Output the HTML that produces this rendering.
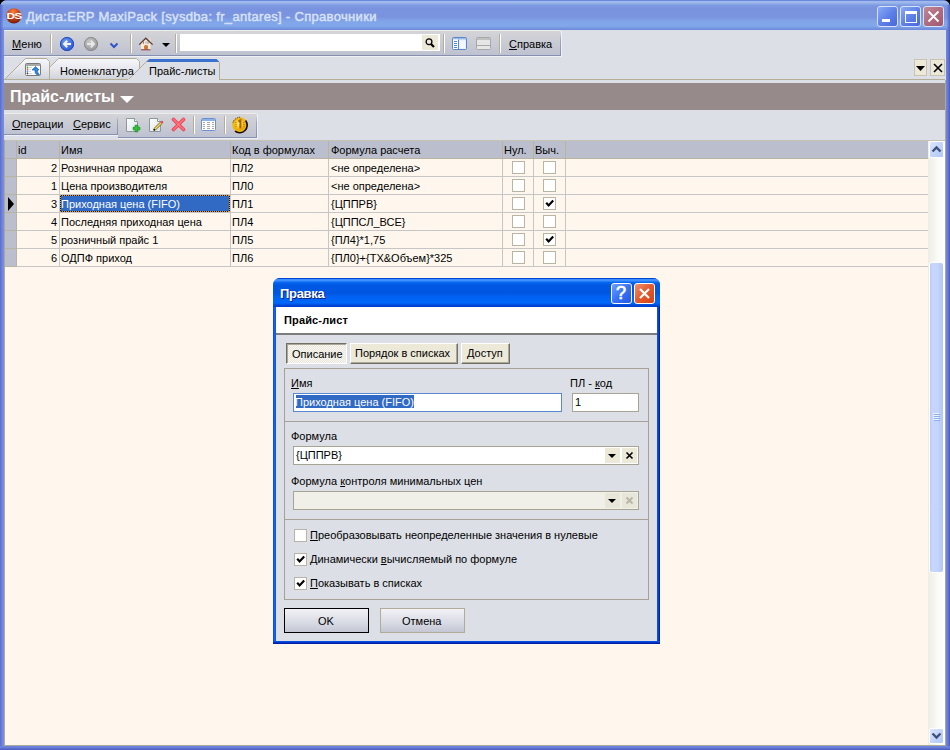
<!DOCTYPE html>
<html><head><meta charset="utf-8">
<style>
*{box-sizing:border-box;margin:0;padding:0}
html,body{width:950px;height:750px;overflow:hidden;background:#000}
body{font-family:"Liberation Sans",sans-serif;font-size:11px;color:#000;position:relative}
.a{position:absolute}
.t{position:absolute;white-space:nowrap;line-height:13px}
u{text-decoration:underline;text-underline-offset:1px;text-decoration-thickness:1px}
#win{left:0;top:0;width:950px;height:750px;background:#7185DA;border-radius:8px 8px 0 0}
#title{left:0;top:0;width:950px;height:30px;border-radius:7px 7px 0 0;
 background:linear-gradient(#6A88DC 0,#6A88DC 1px,#A2BAEC 1px,#9CB6EA 3px,#7E9CE2 5px,#7A93DF 8px,#7A94DF 17px,#80A4E8 21px,#82A8EA 26px,#7898E2 28px,#6C88DA 30px)}
#client{left:4px;top:30px;width:942px;height:716px;background:#DCDFE6}
.tb{position:absolute;background:linear-gradient(#ECECE8 0,#ECECE8 1px,#D4D4D8 1px,#CACCD4 50%,#BEC2D0);border-bottom:1px solid #8890B0;box-shadow:1px 1px 0 #EEF0F4}
.tb::after{content:"";position:absolute;right:0;top:0;width:1px;height:100%;background:linear-gradient(#E8E8EC,#A0A6BE 40%,#8890B0)}
.sep{position:absolute;width:2px;border-left:1px solid #B5AE95;border-right:1px solid #FFF}
#grid{left:4px;top:140px;width:924px;height:606px;background:#FFF7EE}
.hdr{position:absolute;top:141px;height:17px;background:#BBBFCD}
.vl{position:absolute;width:1px;background:#C8C4B8}
.hl{position:absolute;height:1px;background:#C8C4B8}
.cb{position:absolute;width:13px;height:13px;background:#FFF;border:1px solid #B8B4A6}
</style></head><body>
<div id="win" class="a"></div>
<div id="title" class="a">
  <svg class="a" style="left:5px;top:7px" width="18" height="18"><defs><radialGradient id="lg" cx="0.45" cy="0.25" r="0.8"><stop offset="0" stop-color="#F58040"/><stop offset="0.5" stop-color="#C84414"/><stop offset="1" stop-color="#701400"/></radialGradient></defs><circle cx="8.8" cy="8.8" r="7.6" fill="url(#lg)"/><text x="9" y="12.3" font-family="Liberation Sans" font-weight="bold" font-size="9.5" fill="#fff" text-anchor="middle" letter-spacing="-0.6" transform="translate(9 0) scale(1.25 1) translate(-9 0)">DS</text></svg>
<div class="t" style="left:26px;top:9px;font-size:13px;color:#D8E2F6;line-height:15px;letter-spacing:0.32px;-webkit-text-stroke:0.45px #D8E2F6">Диста:ERP MaxiPack [sysdba: fr_antares] - Справочники</div>
  <!-- buttons -->
  <div class="a" style="left:877px;top:6px;width:21px;height:21px;border:1px solid #D8E2FA;border-radius:3px;background:linear-gradient(135deg,#8AAAF4,#5C7EE6 55%,#4A68DC)"><div class="a" style="left:4px;top:12px;width:8px;height:3px;background:#fff"></div></div>
  <div class="a" style="left:900px;top:6px;width:21px;height:21px;border:1px solid #D8E2FA;border-radius:3px;background:linear-gradient(135deg,#8AAAF4,#5C7EE6 55%,#4A68DC)"><div class="a" style="left:4px;top:4px;width:12px;height:12px;border:1.5px solid #fff;border-top-width:3px"></div></div>
  <div class="a" style="left:923px;top:6px;width:21px;height:21px;border:1px solid #D8E2FA;border-radius:3px;background:linear-gradient(135deg,#C08898,#AE6A7C 55%,#A05A70)">
    <svg class="a" style="left:3px;top:3px" width="13" height="13"><path d="M1.5 1.5L11.5 11.5M11.5 1.5L1.5 11.5" stroke="#fff" stroke-width="1.8"/></svg></div>
</div>
<div class="a" style="left:0;top:5px;width:3px;height:25px;background:linear-gradient(90deg,rgba(80,90,200,.8),rgba(100,120,215,.4))"></div>
<div class="a" style="left:947px;top:5px;width:3px;height:25px;background:linear-gradient(90deg,rgba(100,120,215,.3),rgba(70,80,190,.8))"></div>
<div id="client" class="a"></div>

<!-- top toolbar -->
<div class="a tb" style="left:4px;top:30px;width:557px;height:26px"></div>
<div class="t" style="left:12px;top:38px"><u>М</u>еню</div>
<div class="sep" style="left:50px;top:34px;height:19px"></div>
<div class="a" style="left:60px;top:37px;width:14px;height:14px;border-radius:50%;background:radial-gradient(circle at 40% 35%,#6E9CF4,#2F5FD8 70%,#2448B0)"></div>
<svg class="a" style="left:60px;top:37px" width="14" height="14"><circle cx="7" cy="7" r="6.5" fill="none" stroke="#2A48B8" stroke-width="1"/><path d="M11 7H4M7.2 3.8L4 7L7.2 10.2" stroke="#F4F4F4" stroke-width="2" fill="none"/></svg>
<div class="a" style="left:84px;top:37px;width:14px;height:14px;border-radius:50%;background:radial-gradient(circle at 40% 35%,#C8C8C8,#9A9A9A 70%,#888)"></div>
<svg class="a" style="left:84px;top:37px" width="14" height="14"><circle cx="7" cy="7" r="6.5" fill="none" stroke="#8A8A8A" stroke-width="1"/><path d="M3 7H10M6.8 3.8L10 7L6.8 10.2" stroke="#E8E8E8" stroke-width="2" fill="none"/></svg>
<svg class="a" style="left:109px;top:42px" width="10" height="7"><path d="M1.5 1.5L5 5L8.5 1.5" stroke="#2F55C8" stroke-width="2" fill="none"/></svg>
<div class="sep" style="left:130px;top:34px;height:19px"></div>
<svg class="a" style="left:138px;top:37px" width="16" height="14"><rect x="11" y="1" width="2" height="4" fill="#E8D8C0"/><path d="M3 6.5L7.8 2L12.5 6.5V12.5H3Z" fill="#F8EAD8"/><rect x="6" y="8" width="4" height="4.5" rx="1.5" fill="#C87838"/><rect x="7" y="4.5" width="2" height="2" fill="#A8D0F0"/><path d="M5.5 4.5V7M10 4.5V7" stroke="#C88850" stroke-width="1"/><path d="M1.2 7.6L7.8 1.2L14.6 7.6" stroke="#5A3A38" stroke-width="1.3" fill="none"/><path d="M3 12.8H12.5" stroke="#8A2020" stroke-width="0.9"/></svg>
<svg class="a" style="left:162px;top:43px" width="8" height="4"><path d="M0 0H8L4 4Z" fill="#000"/></svg>
<div class="sep" style="left:175px;top:34px;height:19px"></div>
<div class="a" style="left:180px;top:34px;width:260px;height:17px;background:#fff"></div>
<div class="a" style="left:422px;top:35px;width:16px;height:15px;background:#ECE9D8"></div>
<svg class="a" style="left:424px;top:37px" width="12" height="12"><circle cx="5" cy="4.8" r="2.9" stroke="#000" stroke-width="1.3" fill="none"/><path d="M7 7L10 10" stroke="#000" stroke-width="2.2"/></svg>
<div class="sep" style="left:443px;top:34px;height:19px"></div>
<svg class="a" style="left:452px;top:37px" width="15" height="13"><rect x="0.5" y="0.5" width="14" height="12" rx="1" fill="#E8F0FA" stroke="#5B86C8"/><rect x="1" y="1" width="13" height="1.5" fill="#9CBCE8"/><rect x="1" y="2.5" width="5" height="9.5" fill="#fff"/><rect x="6" y="2.5" width="1" height="9.5" fill="#5B86C8"/><path d="M2 4.5H5M2 6.5H5M2 8.5H5M2 10.5H5" stroke="#4A88E0"/><rect x="8" y="4" width="5" height="7" fill="#F4F8FC"/></svg>
<svg class="a" style="left:476px;top:37px" width="15" height="13"><rect x="0.5" y="0.5" width="14" height="12" rx="1" fill="#E6E6E6" stroke="#A8A8A8"/><rect x="1" y="1" width="13" height="2" fill="#C0C0C0"/><rect x="1" y="8" width="13" height="1" fill="#A8A8A8"/></svg>
<div class="sep" style="left:499px;top:34px;height:19px"></div>
<div class="t" style="left:509px;top:38px"><u>С</u>правка</div>

<!-- tabs -->
<svg class="a" style="left:0;top:0" width="950" height="84">
  <defs><linearGradient id="tg" x1="0" y1="0" x2="0" y2="1"><stop offset="0" stop-color="#F6F7FA"/><stop offset="0.5" stop-color="#E6E8EE"/><stop offset="1" stop-color="#D0D2DA"/></linearGradient></defs>
  <path d="M4 79.5H945" stroke="#B5AE95" fill="none"/>
  <path d="M37.5 79.5L58.5 58.5H136.5L139.5 61.5V79.5Z" fill="url(#tg)" stroke="#B5AE95"/>
  <path d="M4.5 79.5L25.5 58.5H46.5L49.5 61.5V79.5Z" fill="url(#tg)" stroke="#B5AE95"/>
  <path d="M128.5 79.5L148.5 59.5H216.5L219.5 62.5V79.5" fill="#DCDFE6" stroke="#B5AE95"/>
  <path d="M128 80H219V79H128Z" fill="#DCDFE6"/>
  <path d="M146.5 62L149.5 59H216.5L219 61.5V62Z" fill="#3B72D0"/>
</svg>
<svg class="a" style="left:25px;top:63px" width="16" height="13"><rect x="0.5" y="0.5" width="15" height="12" rx="1" fill="#fff" stroke="#7A7A7A"/><rect x="1" y="1" width="14" height="2" fill="#A8A8A8"/><circle cx="2.5" cy="4.5" r="0.9" fill="#2AB02A"/><circle cx="2.5" cy="6.5" r="0.9" fill="#D06060"/><circle cx="2.5" cy="8.5" r="0.9" fill="#5A8AF0"/><circle cx="2.5" cy="10.5" r="0.9" fill="#404040"/><path d="M4 4.5H7M4 6.5H6M4 8.5H6M4 10.5H7" stroke="#D8D8D8"/><path d="M10.5 3.5L14 7H12.5V8.5Q12.5 10 14.5 11.5H11.5Q10 10.5 10 8.5V7H7Z" fill="#2A88E0" stroke="#1A60B8" stroke-width="0.7"/></svg>
<div class="t" style="left:60px;top:65px">Номенклатура</div>
<div class="t" style="left:149px;top:65px">Прайс-листы</div>
<div class="a" style="left:914px;top:59px;width:13px;height:17px;background:#ECE9D8;border:1px solid #C8C4B0"></div>
<svg class="a" style="left:916px;top:66px" width="9" height="5"><path d="M0 0H9L4.5 5Z" fill="#000"/></svg>
<div class="a" style="left:930px;top:59px;width:15px;height:17px;background:#ECE9D8;border:1px solid #C8C4B0"></div>
<svg class="a" style="left:933px;top:63px" width="10" height="10"><path d="M1 1L9 9M9 1L1 9" stroke="#000" stroke-width="1.6"/></svg>

<!-- brown header -->
<div class="a" style="left:4px;top:83px;width:942px;height:27px;background:#968A8A"></div>
<div class="t" style="left:10px;top:88px;font-size:16px;font-weight:bold;color:#fff;line-height:18px">Прайс-листы</div>
<svg class="a" style="left:120px;top:96px" width="14" height="8"><path d="M0 0H14L7 7Z" fill="#fff"/></svg>

<!-- second toolbar -->
<div class="a tb" style="left:4px;top:113px;width:114px;height:22px"></div>
<div class="t" style="left:12px;top:118px"><u>О</u>перации</div>
<div class="t" style="left:73px;top:118px"><u>С</u>ервис</div>
<div class="a tb" style="left:118px;top:113px;width:139px;height:25px"></div>
<svg class="a" style="left:125px;top:117px" width="17" height="17">
 <defs><linearGradient id="pg" x1="0" y1="0" x2="1" y2="1"><stop offset="0" stop-color="#FFFFFF"/><stop offset="1" stop-color="#D8E4E8"/></linearGradient></defs>
 <path d="M1.5 1.5H9.5L12.5 4.5V14.5H1.5Z" fill="url(#pg)" stroke="#8A9898"/>
 <path d="M9.5 1.5V4.5H12.5" fill="#fff" stroke="#8A9898"/>
 <path d="M10.2 8.2H12.8V10.2H14.8V12.8H12.8V14.8H10.2V12.8H8.2V10.2H10.2Z" fill="#30C038" stroke="#189020" stroke-width="0.8"/>
</svg>
<svg class="a" style="left:148px;top:117px" width="17" height="17">
 <path d="M1.5 1.5H9.5L12.5 4.5V14.5H1.5Z" fill="url(#pg)" stroke="#8A9898"/>
 <path d="M9.5 1.5V4.5H12.5" fill="#fff" stroke="#8A9898"/>
 <path d="M6.5 12.5L13.5 5.5" stroke="#806020" stroke-width="2.8"/>
 <path d="M6.5 12.5L13.5 5.5" stroke="#F0D860" stroke-width="1.6"/>
 <path d="M13 6L14.8 4.2" stroke="#E04858" stroke-width="2.2"/>
 <path d="M5.6 13.4L6.8 12.2" stroke="#000" stroke-width="1.6"/>
</svg>
<svg class="a" style="left:171px;top:117px" width="15" height="15">
 <path d="M2.5 2.5L12.5 12.5M12.5 2.5L2.5 12.5" stroke="#F04858" stroke-width="3.6" stroke-linecap="round"/>
 <path d="M2.5 2.5L12.5 12.5M12.5 2.5L2.5 12.5" stroke="#FF7880" stroke-width="1.4" stroke-linecap="round"/>
</svg>
<div class="sep" style="left:193px;top:116px;height:18px"></div>
<svg class="a" style="left:201px;top:118px" width="15" height="13">
 <rect x="0.5" y="0.5" width="14" height="12" rx="1" fill="#fff" stroke="#6A90D0"/>
 <rect x="1" y="1" width="13" height="2" fill="#8CB0E8"/>
 <path d="M2 4.5H4M6 4.5H9M11 4.5H13M2 6.5H4M6 6.5H9M11 6.5H13M2 8.5H4M6 8.5H9M11 8.5H13M2 10.5H4M6 10.5H9M11 10.5H13" stroke="#A8A8A8"/>
</svg>
<div class="sep" style="left:224px;top:116px;height:18px"></div>
<svg class="a" style="left:231px;top:116px" width="18" height="18">
 <defs><radialGradient id="cg" cx="0.45" cy="0.4" r="0.6"><stop offset="0" stop-color="#FFF0A0"/><stop offset="0.55" stop-color="#F8C828"/><stop offset="1" stop-color="#E0A000"/></radialGradient></defs>
 <circle cx="8.8" cy="8.8" r="7.6" fill="#F0B810"/>
 <path d="M14.6 4.5A7.6 7.6 0 0 1 4 15.2" stroke="#1A0C00" stroke-width="1.6" fill="none"/>
 <path d="M2 6.5A7.6 7.6 0 0 1 9 1.2" stroke="#201000" stroke-width="0.9" fill="none" stroke-dasharray="1 1"/>
 <circle cx="8.8" cy="8.8" r="5.6" fill="url(#cg)"/>
 <path d="M7.4 5.6L9.4 4.2V12.6" stroke="#A86400" stroke-width="2" fill="none"/>
 <path d="M5 6V12M12.6 6V12" stroke="#C88000" stroke-width="1.3" stroke-dasharray="1 1"/>
</svg>


<!-- grid -->
<div id="grid" class="a"></div>
<div class="hdr" style="left:4px;width:924px"></div>
<div class="hl" style="left:4px;top:140px;width:941px;background:#C6C2B2"></div>
<div class="a" style="left:4px;top:159px;width:12px;height:107px;background:#BBBFCD"></div>
<div class="t" style="left:18px;top:144px">id</div>
<div class="t" style="left:61px;top:144px">Имя</div>
<div class="t" style="left:232px;top:144px">Код в формулах</div>
<div class="t" style="left:331px;top:144px">Формула расчета</div>
<div class="t" style="left:504px;top:144px">Нул.</div>
<div class="t" style="left:535px;top:144px">Выч.</div>
<div class="t" style="left:17px;top:162px;width:40px;text-align:right">2</div>
<div class="t" style="left:61px;top:162px">Розничная продажа</div>
<div class="t" style="left:232px;top:162px">ПЛ2</div>
<div class="t" style="left:331px;top:162px">&lt;не определена&gt;</div>
<div class="cb" style="left:512px;top:161px"></div>
<div class="cb" style="left:543px;top:161px"></div>
<div class="t" style="left:17px;top:180px;width:40px;text-align:right">1</div>
<div class="t" style="left:61px;top:180px">Цена производителя</div>
<div class="t" style="left:232px;top:180px">ПЛ0</div>
<div class="t" style="left:331px;top:180px">&lt;не определена&gt;</div>
<div class="cb" style="left:512px;top:179px"></div>
<div class="cb" style="left:543px;top:179px"></div>
<div class="t" style="left:17px;top:198px;width:40px;text-align:right">3</div>
<div class="a" style="left:60px;top:195px;width:170px;height:17px;background:#316AC5"></div><div class="a" style="left:60px;top:195px;width:170px;height:1px;background:repeating-linear-gradient(90deg,#E8A020 0 1px,#101010 1px 2px)"></div><div class="a" style="left:60px;top:211px;width:170px;height:1px;background:repeating-linear-gradient(90deg,#E8A020 0 1px,#101010 1px 2px)"></div><div class="a" style="left:60px;top:195px;width:1px;height:17px;background:repeating-linear-gradient(#E8A020 0 1px,#101010 1px 2px)"></div><div class="a" style="left:229px;top:195px;width:1px;height:17px;background:repeating-linear-gradient(#E8A020 0 1px,#101010 1px 2px)"></div>
<div class="t" style="left:61px;top:198px;color:#fff">Приходная цена (FIFO)</div>
<div class="t" style="left:232px;top:198px">ПЛ1</div>
<div class="t" style="left:331px;top:198px">{ЦППРВ}</div>
<div class="cb" style="left:512px;top:197px"></div>
<div class="cb" style="left:543px;top:197px"></div>
<svg class="a" style="left:545px;top:199px" width="9" height="9"><path d="M1.2 3.8L3.6 6.4L8.2 1.6" stroke="#000" stroke-width="2.2" fill="none"/></svg>
<div class="t" style="left:17px;top:216px;width:40px;text-align:right">4</div>
<div class="t" style="left:61px;top:216px">Последняя приходная цена</div>
<div class="t" style="left:232px;top:216px">ПЛ4</div>
<div class="t" style="left:331px;top:216px">{ЦППСЛ_ВСЕ}</div>
<div class="cb" style="left:512px;top:215px"></div>
<div class="cb" style="left:543px;top:215px"></div>
<div class="t" style="left:17px;top:234px;width:40px;text-align:right">5</div>
<div class="t" style="left:61px;top:234px">розничный прайс 1</div>
<div class="t" style="left:232px;top:234px">ПЛ5</div>
<div class="t" style="left:331px;top:234px">{ПЛ4}*1,75</div>
<div class="cb" style="left:512px;top:233px"></div>
<div class="cb" style="left:543px;top:233px"></div>
<svg class="a" style="left:545px;top:235px" width="9" height="9"><path d="M1.2 3.8L3.6 6.4L8.2 1.6" stroke="#000" stroke-width="2.2" fill="none"/></svg>
<div class="t" style="left:17px;top:252px;width:40px;text-align:right">6</div>
<div class="t" style="left:61px;top:252px">ОДПФ приход</div>
<div class="t" style="left:232px;top:252px">ПЛ6</div>
<div class="t" style="left:331px;top:252px">{ПЛ0}+{ТХ&amp;Объем}*325</div>
<div class="cb" style="left:512px;top:251px"></div>
<div class="cb" style="left:543px;top:251px"></div>
<svg class="a" style="left:8px;top:197px" width="6" height="14"><path d="M0 0L6 7L0 14Z" fill="#000"/></svg>
<div class="a" style="left:4px;top:158px;width:924px;height:1px;background:#B8B4A0"></div>
<div class="a" style="left:16px;top:141px;width:1px;height:17px;background:#B8B4A0"></div>
<div class="a" style="left:59px;top:141px;width:1px;height:17px;background:#B8B4A0"></div>
<div class="a" style="left:230px;top:141px;width:1px;height:17px;background:#B8B4A0"></div>
<div class="a" style="left:328px;top:141px;width:1px;height:17px;background:#B8B4A0"></div>
<div class="a" style="left:502px;top:141px;width:1px;height:17px;background:#B8B4A0"></div>
<div class="a" style="left:533px;top:141px;width:1px;height:17px;background:#B8B4A0"></div>
<div class="a" style="left:565px;top:141px;width:1px;height:17px;background:#B8B4A0"></div>
<div class="a" style="left:16px;top:176px;width:912px;height:1px;background:#C6C6C6"></div>
<div class="a" style="left:4px;top:176px;width:12px;height:1px;background:#B8B4A0"></div>
<div class="a" style="left:16px;top:194px;width:912px;height:1px;background:#C6C6C6"></div>
<div class="a" style="left:4px;top:194px;width:12px;height:1px;background:#B8B4A0"></div>
<div class="a" style="left:16px;top:212px;width:912px;height:1px;background:#C6C6C6"></div>
<div class="a" style="left:4px;top:212px;width:12px;height:1px;background:#B8B4A0"></div>
<div class="a" style="left:16px;top:230px;width:912px;height:1px;background:#C6C6C6"></div>
<div class="a" style="left:4px;top:230px;width:12px;height:1px;background:#B8B4A0"></div>
<div class="a" style="left:16px;top:248px;width:912px;height:1px;background:#C6C6C6"></div>
<div class="a" style="left:4px;top:248px;width:12px;height:1px;background:#B8B4A0"></div>
<div class="a" style="left:16px;top:266px;width:912px;height:1px;background:#C6C6C6"></div>
<div class="a" style="left:4px;top:266px;width:12px;height:1px;background:#B8B4A0"></div>
<div class="a" style="left:59px;top:159px;width:1px;height:107px;background:#C6C6C6"></div>
<div class="a" style="left:230px;top:159px;width:1px;height:107px;background:#C6C6C6"></div>
<div class="a" style="left:328px;top:159px;width:1px;height:107px;background:#C6C6C6"></div>
<div class="a" style="left:502px;top:159px;width:1px;height:107px;background:#C6C6C6"></div>
<div class="a" style="left:533px;top:159px;width:1px;height:107px;background:#C6C6C6"></div>
<div class="a" style="left:565px;top:159px;width:1px;height:107px;background:#C6C6C6"></div>
<div class="a" style="left:16px;top:159px;width:1px;height:108px;background:#B8B4A0"></div>
<!--GRIDEND-->
<!-- scrollbar -->
<div class="a" style="left:928px;top:141px;width:17px;height:604px;background:linear-gradient(90deg,#EEEDE5,#FBFBF8 60%,#FEFEFC)"></div>
<div class="a" style="left:929px;top:141px;width:15px;height:17px;border:1px solid #fff;border-radius:2px;background:linear-gradient(135deg,#DDE6FC,#C4D4FA 50%,#B0C8F8)"></div>
<svg class="a" style="left:931px;top:145px" width="11" height="8"><path d="M1.5 6.5L5.5 2.5L9.5 6.5" stroke="#3E5078" stroke-width="2.3" fill="none"/></svg>
<div class="a" style="left:929px;top:262px;width:15px;height:311px;border:1px solid #fff;border-radius:3px;background:linear-gradient(90deg,#B8CCF6,#C8D6FC 20%,#C4D4FA 60%,#B0C8F6)"></div>
<svg class="a" style="left:933px;top:412px" width="8" height="9"><path d="M0 1.5H6M0 3.5H6M0 5.5H6M0 7.5H6" stroke="#EEF3FE"/><path d="M1 2.5H7M1 4.5H7M1 6.5H7M1 8.5H7" stroke="#8CAEF0"/></svg>
<div class="a" style="left:929px;top:728px;width:15px;height:16px;border:1px solid #fff;border-radius:2px;background:linear-gradient(135deg,#DDE6FC,#C4D4FA 50%,#B0C8F8)"></div>
<svg class="a" style="left:931px;top:732px" width="11" height="8"><path d="M1.5 1.5L5.5 5.5L9.5 1.5" stroke="#3E5078" stroke-width="2.3" fill="none"/></svg>
<!-- frame lines inside -->
<div class="a" style="left:4px;top:745px;width:942px;height:1px;background:#ACA899"></div>
<div class="a" style="left:945px;top:80px;width:1px;height:666px;background:#ACA899"></div>
<div class="a" style="left:4px;top:140px;width:1px;height:606px;background:#ACA899"></div>
<div class="a" style="left:946px;top:30px;width:4px;height:720px;background:linear-gradient(90deg,#7088DE,#6478D4 50%,#4C58BC)"></div>
<div class="a" style="left:0px;top:30px;width:4px;height:720px;background:linear-gradient(90deg,#5A6ACA,#6E84DA 50%,#7890E2)"></div>
<div class="a" style="left:0px;top:746px;width:950px;height:4px;background:linear-gradient(#7088DE,#6478D4 50%,#4C58BC)"></div>

<!-- dialog -->
<div class="a" style="left:273px;top:278px;width:387px;height:366px;background:linear-gradient(90deg,#0034D8 0,#1A66F6 1px,#1260F0 2px,#0A50E4 3px,#0A50E4 384px,#0A4CE0 385px,#0030C0 386px,#001C98 387px);border-radius:7px 7px 0 0"></div>
<div class="a" style="left:273px;top:641px;width:387px;height:3px;background:linear-gradient(#0A5CF0,#0034C8 50%,#001890)"></div>
<div class="a" style="left:273px;top:278px;width:387px;height:29px;border-radius:7px 7px 0 0;background:linear-gradient(#0046D6 0,#0046D6 1px,#3A8EFE 1px,#3C90FF 3px,#0A68F2 4px,#0058E2 7px,#0056E0 15px,#0062F4 19px,#0068FA 25px,#0058E8 26px,#0040D0 28px,#0040D0 29px)"></div>
<div class="t" style="left:280px;top:286px;font-size:13px;font-weight:bold;color:#fff;line-height:15px;letter-spacing:-0.3px;text-shadow:1px 1px 0 #0A1E80">Правка</div>
<div class="a" style="left:611px;top:283px;width:21px;height:21px;border:1px solid #fff;border-radius:3px;background:linear-gradient(135deg,#6E9EFA,#3A72F4 50%,#2458E6)"></div>
<div class="t" style="left:616px;top:284px;font-size:18px;color:#fff;line-height:19px;-webkit-text-stroke:0.7px #fff">?</div>
<div class="a" style="left:634px;top:283px;width:21px;height:21px;border:1px solid #fff;border-radius:3px;background:linear-gradient(135deg,#F09070,#E4582C 50%,#D24418)"></div>
<svg class="a" style="left:638px;top:287px" width="13" height="13"><path d="M2 2L11 11M11 2L2 11" stroke="#fff" stroke-width="2.2"/></svg>
<!-- dialog client -->
<div class="a" style="left:276px;top:307px;width:381px;height:334px;background:#DCDFE6"></div>
<div class="a" style="left:276px;top:307px;width:381px;height:26px;background:#fff"></div>
<div class="a" style="left:276px;top:333px;width:381px;height:2px;background:#7C7C7C"></div>
<div class="t" style="left:284px;top:314px;font-weight:bold;letter-spacing:0.15px">Прайс-лист</div>
<!-- tab buttons -->
<div class="a" style="left:286px;top:343px;width:61px;height:21px;border:1px solid;border-color:#716F64 #fff #fff #716F64;box-shadow:inset 1px 1px 0 #ACA899;background:repeating-conic-gradient(#FAF8F0 0 25%,#E8E6DC 0 50%) 0 0/2px 2px"></div>
<div class="t" style="left:292px;top:348px">Описание</div>
<div class="a" style="left:350px;top:343px;width:108px;height:21px;border:1px solid;border-color:#fff #716F64 #716F64 #fff;box-shadow:inset -1px -1px 0 #ACA899;background:#ECE9D8"></div>
<div class="t" style="left:355px;top:347px">Порядок в списках</div>
<div class="a" style="left:461px;top:343px;width:49px;height:21px;border:1px solid;border-color:#fff #716F64 #716F64 #fff;box-shadow:inset -1px -1px 0 #ACA899;background:#ECE9D8"></div>
<div class="t" style="left:467px;top:347px">Доступ</div>
<!-- group box -->
<div class="a" style="left:284px;top:368px;width:365px;height:232px;border:1px solid #A8A098"></div>
<div class="a" style="left:285px;top:421px;width:363px;height:1px;background:#A8A098"></div>
<div class="a" style="left:285px;top:519px;width:363px;height:1px;background:#A8A098"></div>
<div class="t" style="left:291px;top:377px"><u>И</u>мя</div>
<div class="a" style="left:293px;top:393px;width:269px;height:19px;background:#fff;border:1px solid #5A88D0"></div>
<div class="a" style="left:296px;top:395px;width:118px;height:13px;background:#316AC5"></div>
<div class="t" style="left:295px;top:396px;color:#fff">Приходная цена (FIFO)</div>
<div class="t" style="left:570px;top:377px">ПЛ - <u>к</u>од</div>
<div class="a" style="left:572px;top:393px;width:67px;height:19px;background:#fff;border:1px solid #A8A493"></div>
<div class="t" style="left:575px;top:396px">1</div>

<div class="t" style="left:291px;top:430px">Формула</div>
<div class="a" style="left:293px;top:446px;width:346px;height:19px;background:#fff;border:1px solid #A8A493"></div>
<div class="t" style="left:296px;top:449px">{ЦППРВ}</div>
<div class="a" style="left:605px;top:448px;width:15px;height:15px;background:#ECE9D8"></div>
<svg class="a" style="left:608px;top:454px" width="8" height="4"><path d="M0 0H8L4 4Z" fill="#000"/></svg>
<div class="a" style="left:622px;top:448px;width:15px;height:15px;background:#ECE9D8"></div>
<svg class="a" style="left:625px;top:451px" width="9" height="9"><path d="M1.5 1.5L7.5 7.5M7.5 1.5L1.5 7.5" stroke="#000" stroke-width="1.6"/></svg>

<div class="t" style="left:291px;top:475px">Формула <u>к</u>онтроля минимальных цен</div>
<div class="a" style="left:293px;top:491px;width:346px;height:19px;background:#F0F0E8;border:1px solid #A8A493"></div>
<div class="a" style="left:605px;top:493px;width:15px;height:15px;background:#E8E6D8"></div>
<svg class="a" style="left:608px;top:499px" width="8" height="4"><path d="M0 0H8L4 4Z" fill="#000"/></svg>
<div class="a" style="left:622px;top:493px;width:15px;height:15px;background:#E8E6D8"></div>
<svg class="a" style="left:625px;top:496px" width="9" height="9"><path d="M1.5 1.5L7.5 7.5M7.5 1.5L1.5 7.5" stroke="#B8B4A8" stroke-width="1.8"/></svg>

<div class="cb" style="left:294px;top:529px"></div>
<div class="t" style="left:310px;top:529px"><u>П</u>реобразовывать неопределенные значения в нулевые</div>
<div class="cb" style="left:294px;top:553px"></div>
<svg class="a" style="left:296px;top:555px" width="9" height="9"><path d="M1.2 3.8L3.6 6.4L8.2 1.6" stroke="#000" stroke-width="2.2" fill="none"/></svg>
<div class="t" style="left:310px;top:553px">Динамически <u>в</u>ычисляемый по формуле</div>
<div class="cb" style="left:294px;top:577px"></div>
<svg class="a" style="left:296px;top:579px" width="9" height="9"><path d="M1.2 3.8L3.6 6.4L8.2 1.6" stroke="#000" stroke-width="2.2" fill="none"/></svg>
<div class="t" style="left:310px;top:577px"><u>П</u>оказывать в списках</div>

<div class="a" style="left:284px;top:608px;width:85px;height:25px;border:1px solid #000;background:linear-gradient(#F2F2F6,#D8DAE4 60%,#C4C6D4)"></div>
<div class="t" style="left:318px;top:615px">OK</div>
<div class="a" style="left:380px;top:608px;width:85px;height:25px;border:1px solid #B0AC98;background:linear-gradient(#F2F2F6,#D8DAE4 60%,#C4C6D4)"></div>
<div class="t" style="left:402px;top:615px">Отмена</div>

<!--DLGEND-->
</body></html>
